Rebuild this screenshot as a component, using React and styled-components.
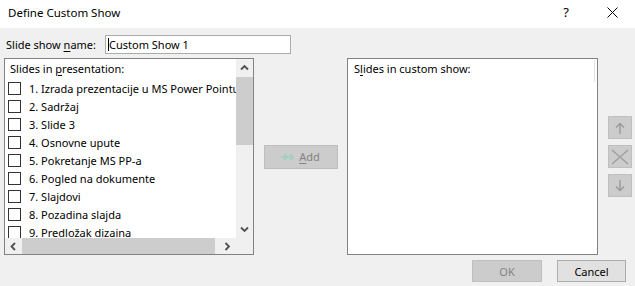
import React from "react";
import styled, { createGlobalStyle } from "styled-components";

const Global = createGlobalStyle`
  html, body { margin: 0; padding: 0; }
  body { width: 635px; height: 286px; overflow: hidden; background: #f0f0f0;
    font-family: "Noto Sans", "Open Sans", sans-serif; font-size: 11px; color: #000; }
`;

const Window = styled.div`
  width: 635px; height: 286px; display: flex; flex-direction: column; background: #f0f0f0;
`;
const TitleBar = styled.div`
  height: 28px; background: #fff; display: flex; align-items: center; padding-left: 8px;
`;
const Title = styled.div`flex: 1; font-size: 11.5px; color: #000; padding-bottom: 3px;`;
const TitleBtn = styled.div`
  width: ${p => p.$w}px; height: 28px; display: flex; align-items: center; justify-content: center;
  font-size: 13px; color: #000; padding-bottom: 4px; box-sizing: border-box;
`;
const Body = styled.div`
  flex: 1; display: flex; flex-direction: column; padding: 7px 4px 0 4px;
`;
const NameRow = styled.div`display: flex; align-items: center; height: 19px; padding-left: 2px;`;
const Label = styled.label`width: 99px; white-space: nowrap;`;
const U = styled.span`text-decoration: underline; text-underline-offset: 2px;`;
const Input = styled.div`
  width: 186px; height: 19px; box-sizing: border-box; border: 1px solid #acacac; background: #fff;
  display: flex; align-items: center; padding-left: 2px;
`;
const Caret = styled.span`display: inline-block; width: 1px; height: 13px; background: #000;`;
const MainRow = styled.div`
  display: flex; align-items: center; margin-top: 4px; height: 197px;
`;
const ListBox = styled.div`
  width: ${p => p.$w}px; height: 197px; flex: none; box-sizing: border-box; border: 1px solid #828282;
  background: #fff; position: relative; display: grid;
  grid-template-columns: 1fr ${p => (p.$scroll ? "17px" : "0")};
  grid-template-rows: 1fr ${p => (p.$scroll ? "16px" : "0")};
  overflow: hidden;
`;
const Content = styled.div`overflow: hidden; padding-left: ${p => p.$pad}px;`;
const Header = styled.div`height: 20px; line-height: 20px; padding-left: ${p => p.$pad}px; white-space: nowrap;`;
const Item = styled.div`height: 18px; display: flex; align-items: center; white-space: nowrap;`;
const Check = styled.span`
  width: 13px; height: 13px; box-sizing: border-box; border: 1px solid #333; background: #fff;
  margin: 0 8px 0 2px; flex: none;
`;
const VScroll = styled.div`background: #f0f0f0; display: flex; flex-direction: column;`;
const HScroll = styled.div`background: #f0f0f0; display: flex;`;
const Arrow = styled.div`
  width: 17px; height: ${p => p.$h || 17}px; flex: none; display: flex; align-items: center; justify-content: center;
`;
const VTrack = styled.div`flex: 1; padding-top: 1px;`;
const VThumb = styled.div`width: 17px; height: 68px; background: #cdcdcd;`;
const HTrack = styled.div`flex: 1; display: flex; align-items: center;`;
const HThumb = styled.div`width: 193px; height: 16px; background: #cdcdcd;`;
const Corner = styled.div`background: #f0f0f0;`;
const FaintLine = styled.div`
  position: absolute; right: 2px; top: 1px; width: 1px; height: 22px; background: #e3e3e3;
`;
const Middle = styled.div`
  width: 93px; flex: none; display: flex; justify-content: center;
`;
const Button = styled.div`
  width: ${p => p.$w}px; height: ${p => p.$h}px; flex: none; box-sizing: border-box;
  border: 1px solid ${p => (p.$disabled ? "#bfbfbf" : "#adadad")};
  background: ${p => (p.$disabled ? "#cccccc" : "#e1e1e1")};
  color: ${p => (p.$disabled ? "#838383" : "#000")};
  display: flex; align-items: center; justify-content: center; gap: 4px;
`;
const SideCol = styled.div`
  display: flex; flex-direction: column; gap: 6px; margin-left: 10px;
`;
const Footer = styled.div`
  display: flex; justify-content: flex-end; gap: 15px; margin-top: 5px; padding-right: 5px;
`;

const items = [
  "1. Izrada prezentacije u MS Power Pointu",
  "2. Sadržaj",
  "3. Slide 3",
  "4. Osnovne upute",
  "5. Pokretanje MS PP-a",
  "6. Pogled na dokumente",
  "7. Slajdovi",
  "8. Pozadina slajda",
  "9. Predložak dizaina",
];

const Chev = ({ dir }) => {
  const d = {
    up: "M1 5.5 L4.5 2 L8 5.5",
    down: "M1 1.5 L4.5 5 L8 1.5",
    left: "M5 1 L1.5 4.5 L5 8",
    right: "M1.5 1 L5 4.5 L1.5 8",
  }[dir];
  const vert = dir === "up" || dir === "down";
  return (
    <svg width={vert ? 9 : 7} height={vert ? 7 : 9} viewBox={vert ? "0 0 9 7" : "0 0 7 9"}>
      <path d={d} fill="none" stroke="#505050" strokeWidth="1.8" />
    </svg>
  );
};

export default function App() {
  return (
    <Window>
      <Global />
      <TitleBar>
        <Title>Define Custom Show</Title>
        <TitleBtn $w={46}>?</TitleBtn>
        <TitleBtn $w={46}>
          <svg width="11" height="11" viewBox="0 0 11 11">
            <path d="M0.5 0.5 L10.5 10.5 M10.5 0.5 L0.5 10.5" stroke="#000" strokeWidth="1" />
          </svg>
        </TitleBtn>
      </TitleBar>
      <Body>
        <NameRow>
          <Label>Slide show <U>n</U>ame:</Label>
          <Input><Caret />Custom Show 1</Input>
        </NameRow>
        <MainRow>
          <ListBox $w={250} $scroll>
            <Content $pad={1}>
              <Header $pad={4}>Slides in <U>p</U>resentation:</Header>
              {items.map(t => (
                <Item key={t}><Check />{t}</Item>
              ))}
            </Content>
            <VScroll>
              <Arrow><Chev dir="up" /></Arrow>
              <VTrack><VThumb /></VTrack>
              <Arrow><Chev dir="down" /></Arrow>
            </VScroll>
            <HScroll>
              <Arrow $h={16}><Chev dir="left" /></Arrow>
              <HTrack><HThumb /></HTrack>
              <Arrow $h={16}><Chev dir="right" /></Arrow>
            </HScroll>
            <Corner />
          </ListBox>
          <Middle>
            <Button $w={74} $h={24} $disabled>
              <svg width="14" height="8" viewBox="0 0 14 8">
                <path d="M0 4 H6 M3 1 L6 4 L3 7 M6 4 H12 M9 1 L12 4 L9 7" fill="none" stroke="#9fcfc0" strokeWidth="1.6" />
              </svg>
              <span><U>A</U>dd</span>
            </Button>
          </Middle>
          <ListBox $w={251}>
            <Content $pad={6}>
              <Header $pad={0}>S<U>l</U>ides in custom show:</Header>
            </Content>
            <FaintLine />
          </ListBox>
          <SideCol>
            <Button $w={24} $h={23} $disabled>
              <svg width="10" height="12" viewBox="0 0 10 12">
                <path d="M5 12 V1.5 M1 5.5 L5 1.5 L9 5.5" fill="none" stroke="#9a9a9a" strokeWidth="1.4" />
              </svg>
            </Button>
            <Button $w={24} $h={23} $disabled>
              <svg width="18" height="16" viewBox="0 0 18 16">
                <path d="M1 1 L17 15 M17 1 L1 15" fill="none" stroke="#a0a0a0" strokeWidth="1.5" />
              </svg>
            </Button>
            <Button $w={24} $h={23} $disabled>
              <svg width="10" height="12" viewBox="0 0 10 12">
                <path d="M5 0 V10.5 M1 6.5 L5 10.5 L9 6.5" fill="none" stroke="#9a9a9a" strokeWidth="1.4" />
              </svg>
            </Button>
          </SideCol>
        </MainRow>
        <Footer>
          <Button $w={70} $h={22} $disabled>OK</Button>
          <Button $w={69} $h={22}>Cancel</Button>
        </Footer>
      </Body>
    </Window>
  );
}
